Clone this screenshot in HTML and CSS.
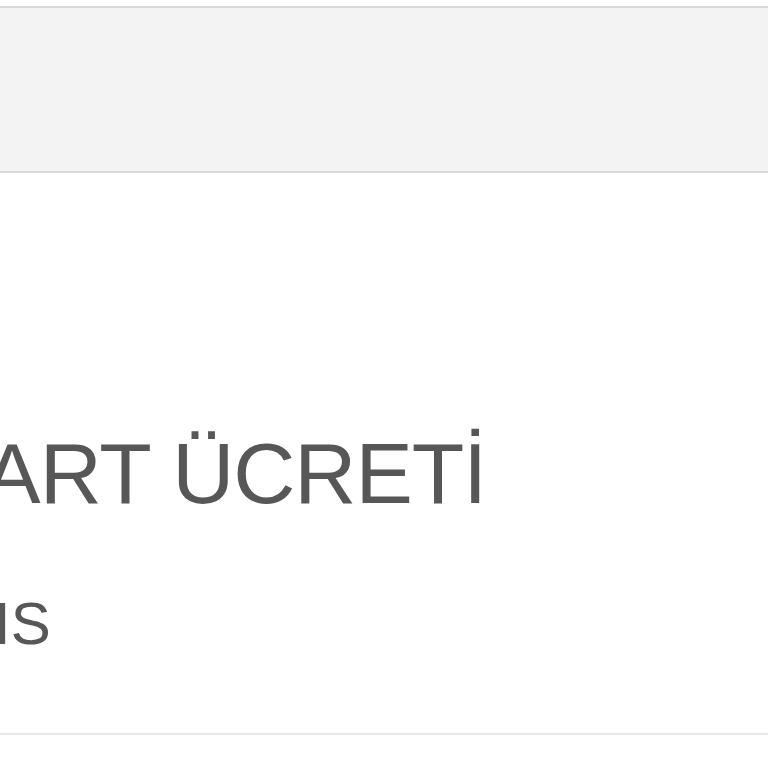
FILE: index.html
```html
<!DOCTYPE html>
<html lang="tr">
<head>
<meta charset="utf-8">
<title>Kart Ücreti</title>
<link rel="stylesheet" href="styles.css">
</head>
<body>
<div class="page">
  <header class="topbar"></header>
  <main class="content">
    <h1 class="title">KART ÜCRETİ</h1>
    <p class="subtitle">IS</p>
  </main>
  <hr class="divider">
</div>
</body>
</html>
```
FILE: styles.css
```css
html, body {
  margin: 0;
  padding: 0;
  background: #ffffff;
  overflow: hidden;
}
.page {
  width: 768px;
  height: 768px;
  overflow: hidden;
  font-family: "Liberation Sans", Arial, Helvetica, sans-serif;
  color: #575757;
}
.topbar {
  margin-top: 6px;
  height: 163px;
  background: #f3f3f3;
  border-top: 2px solid #d9d9d9;
  border-bottom: 2px solid #d9d9d9;
}
.content {
  padding-top: 250px;
}
.title {
  margin: 0 0 0 -73px;
  font-size: 86px;
  line-height: 100px;
  font-weight: normal;
  letter-spacing: -1px;
  white-space: nowrap;
}
.subtitle {
  margin: 66px 0 0 -6px;
  font-size: 60px;
  line-height: 70px;
  white-space: nowrap;
}
.divider {
  margin: 74px 0 0 0;
  border: 0;
  border-top: 2px solid #e6e6e6;
  height: 0;
}
```
